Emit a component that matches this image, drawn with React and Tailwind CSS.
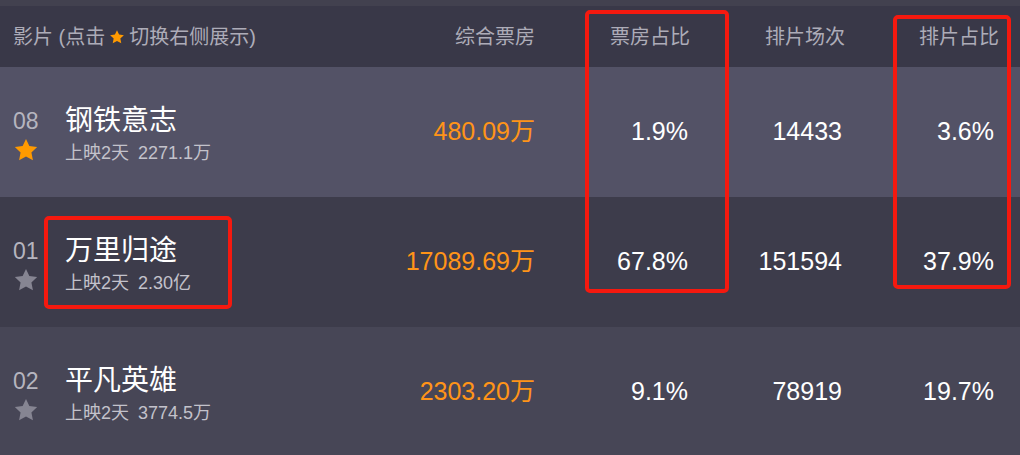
import React from "react";

const movies = [
  {
    rank: "08",
    name: "钢铁意志",
    days: "上映2天",
    total: "2271.1万",
    box: "480.09万",
    boxRate: "1.9%",
    shows: "14433",
    showRate: "3.6%",
    starred: true,
    bg: "bg-[#535266]",
  },
  {
    rank: "01",
    name: "万里归途",
    days: "上映2天",
    total: "2.30亿",
    box: "17089.69万",
    boxRate: "67.8%",
    shows: "151594",
    showRate: "37.9%",
    starred: false,
    bg: "bg-[#3d3c4b]",
  },
  {
    rank: "02",
    name: "平凡英雄",
    days: "上映2天",
    total: "3774.5万",
    box: "2303.20万",
    boxRate: "9.1%",
    shows: "78919",
    showRate: "19.7%",
    starred: false,
    bg: "bg-[#474656]",
  },
];

const Star = ({ className }) => (
  <svg viewBox="0 0 24 24" className={className} fill="currentColor">
    <path d="M12 1.8l3.1 6.6 7.2.9-5.3 5 1.4 7.1L12 17.9l-6.4 3.5 1.4-7.1-5.3-5 7.2-.9z" />
  </svg>
);

const App = () => {
  return (
    <div
      className="relative w-[1020px] h-[455px] overflow-hidden bg-[#42414f]"
      style={{ fontFamily: '"Liberation Sans", "Noto Sans CJK SC", sans-serif' }}
    >
      <div className="h-[6px] bg-[#42414f]" />

      {/* Header */}
      <div className="flex items-center h-[61px] bg-[#393848] text-[20px] text-[#adacb8] pr-[21px]">
        <div className="flex-1 flex items-center pl-[13px]">
          影片 (点击
          <Star className="w-[16px] h-[16px] mx-[4px] text-[#ff9a00]" />
          切换右侧展示)
        </div>
        <div className="w-[155px] text-right">综合票房</div>
        <div className="w-[155px] text-right">票房占比</div>
        <div className="w-[155px] text-right">排片场次</div>
        <div className="w-[154px] text-right">排片占比</div>
      </div>

      {/* Rows */}
      {movies.map((m) => (
        <div
          key={m.rank}
          className={`flex items-center h-[130px] pr-[21px] ${m.bg}`}
        >
          <div className="flex-1 flex items-start pl-[13px] pt-[6px]">
            <div className="flex flex-col items-start w-[52px] pt-[4px]">
              <span className="text-[23px] leading-[24px] text-[#b6b5bf]">
                {m.rank}
              </span>
              <Star
                className={`w-[26px] h-[26px] mt-[4px] ${
                  m.starred ? "text-[#ff9a00]" : "text-[#868592]"
                }`}
              />
            </div>
            <div className="flex flex-col">
              <span className="text-[28px] leading-[32px] text-white">
                {m.name}
              </span>
              <span className="text-[18px] leading-[24px] text-[#c3c2cb] mt-[4px]">
                {m.days}
                <span className="ml-[9px]">{m.total}</span>
              </span>
            </div>
          </div>
          <div className="w-[155px] text-right text-[25px] text-[#ff9418]">
            {m.box}
          </div>
          <div className="w-[155px] text-right text-[25px] text-white pr-[2px]">
            {m.boxRate}
          </div>
          <div className="w-[155px] text-right text-[25px] text-white pr-[3px]">
            {m.shows}
          </div>
          <div className="w-[154px] text-right text-[25px] text-white pr-[5px]">
            {m.showRate}
          </div>
        </div>
      ))}

      {/* Annotation boxes */}
      <div className="absolute left-[585px] top-[10px] w-[144px] h-[283px] border-[4px] border-[#f5190f] rounded-[5px]" />
      <div className="absolute left-[893px] top-[15px] w-[118px] h-[274px] border-[4px] border-[#f5190f] rounded-[5px]" />
      <div className="absolute left-[44px] top-[216px] w-[188px] h-[93px] border-[4px] border-[#f5190f] rounded-[5px]" />
    </div>
  );
};

export default App;
